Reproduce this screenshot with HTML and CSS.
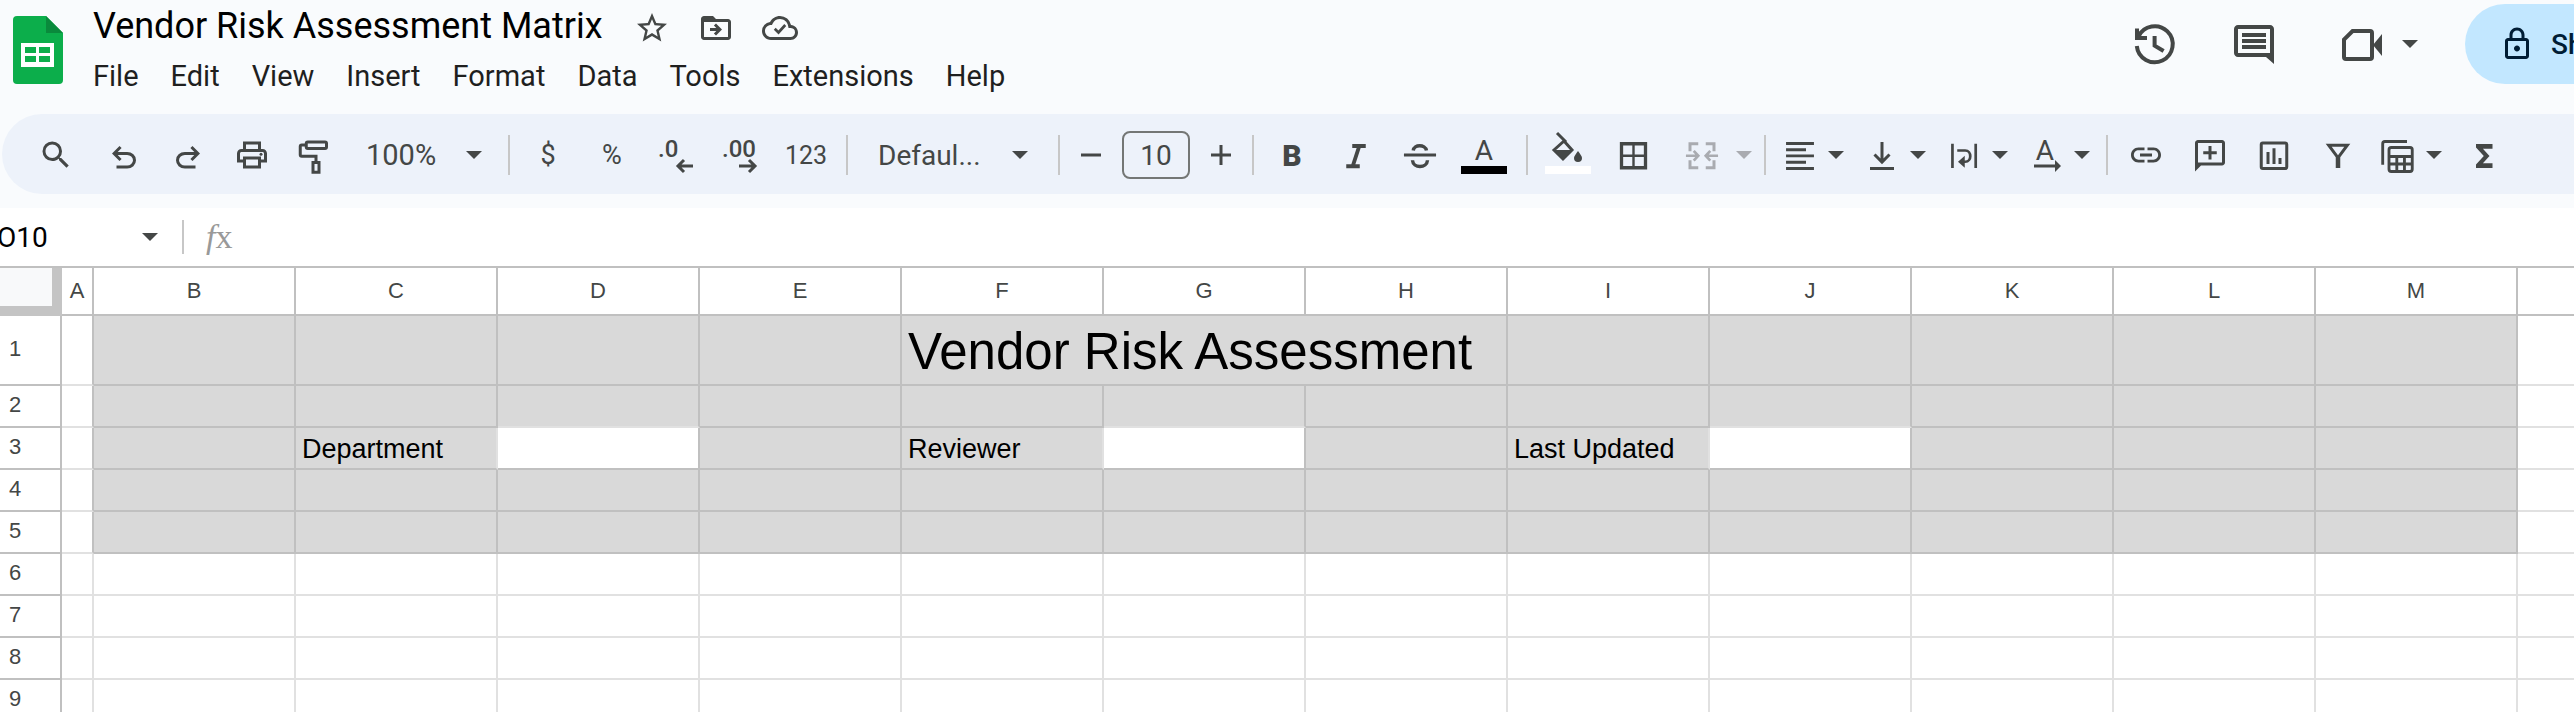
FILE: index.html
```html
<!DOCTYPE html>
<html lang="en">
<head>
    <meta charset="UTF-8">
    <meta name="viewport" content="width=device-width, initial-scale=1.0">
    <title>Vendor Risk Assessment Matrix</title>
    <link rel="stylesheet" href="styles.css">
</head>
<body>

<!-- Shared shapes -->
<svg class="defs" aria-hidden="true">
    <symbol id="caret" viewBox="0 0 16 8"><path d="M0 0h16L8 8z"/></symbol>
</svg>

<header class="header">
    <svg class="logo" viewBox="0 0 50 68" role="img" aria-label="Sheets">
        <path fill="#0cae4b" d="M4 0h29l17 17v47a4 4 0 0 1-4 4H4a4 4 0 0 1-4-4V4a4 4 0 0 1 4-4z"/>
        <path fill="#0a8a3c" d="M33 0l17 17H33z"/>
        <path fill="#fff" fill-rule="evenodd" d="M8 27h33v24H8zM12 31h11v6H12zM26 31h11v6H26zM12 40h11v6H12zM26 40h11v6H26z"/>
    </svg>

    <div class="doc">
        <div class="title-row">
            <h1>Vendor Risk Assessment Matrix</h1>
            <button class="title-btn" aria-label="Star">
                <svg class="icon" viewBox="0 0 24 24"><path d="M22 9.24l-7.19-.62L12 2 9.19 8.63 2 9.24l5.46 4.73L5.82 21 12 17.27 18.18 21l-1.63-7.03L22 9.24zM12 15.4l-3.76 2.27 1-4.28-3.32-2.88 4.38-.38L12 6.1l1.71 4.04 4.38.38-3.32 2.88 1 4.28L12 15.4z"/></svg>
            </button>
            <button class="title-btn" aria-label="Move">
                <svg class="icon" viewBox="0 0 24 24"><path d="M20 6h-8l-2-2H4c-1.1 0-2 .9-2 2v12c0 1.1.9 2 2 2h16c1.1 0 2-.9 2-2V8c0-1.1-.9-2-2-2zm0 12H4V8h16v10z"/><path d="M12.2 12H8v2h4.2l-1.6 1.6L12 17l4-4-4-4-1.4 1.4z"/></svg>
            </button>
            <button class="title-btn" aria-label="Saved to Drive">
                <svg class="icon" viewBox="0 0 24 24"><path d="M19.35 10.04A7.49 7.49 0 0 0 12 4C9.11 4 6.6 5.64 5.35 8.04A5.994 5.994 0 0 0 0 14c0 3.31 2.69 6 6 6h13c2.76 0 5-2.24 5-5 0-2.64-2.05-4.78-4.65-4.96zM19 18H6c-2.21 0-4-1.79-4-4 0-2.05 1.53-3.76 3.56-3.97l1.07-.11.5-.95A5.469 5.469 0 0 1 12 6c2.62 0 4.88 1.86 5.39 4.43l.3 1.5 1.53.11A2.98 2.98 0 0 1 22 15c0 1.65-1.35 3-3 3z"/><path class="line" stroke-width="1.8" d="M8.5 12.5L11 15l4.5-5"/></svg>
            </button>
        </div>
        <nav class="menu">
            <button>File</button>
            <button>Edit</button>
            <button>View</button>
            <button>Insert</button>
            <button>Format</button>
            <button>Data</button>
            <button>Tools</button>
            <button>Extensions</button>
            <button>Help</button>
        </nav>
    </div>

    <div class="actions">
        <button aria-label="Version history">
            <svg class="icon-lg" viewBox="0 0 24 24"><path class="line" d="M4.2 8.3A9 9 0 1 1 3.4 13M3.5 4.2V9h5"/><path class="line" d="M12.3 8v4.8l4.5 2.7"/></svg>
        </button>
        <button aria-label="Comments">
            <svg class="icon-lg" viewBox="0 0 24 24"><path fill-rule="evenodd" d="M2 4.5c0-1.1.9-2 2-2h16c1.1 0 2 .9 2 2V22l-4-3.5H4c-1.1 0-2-.9-2-2zM4 4.5v12h16v-12z"/><path d="M6 6.5h12v2H6zM6 9.5h12v2H6zM6 12.5h12v2H6z"/></svg>
        </button>
        <button class="meet" aria-label="Join a call">
            <svg class="icon-lg" viewBox="0 0 24 24"><path class="line" d="M7.3 5.5H16a1 1 0 0 1 1 1v12a1 1 0 0 1-1 1H4a1 1 0 0 1-1-1V9.8z"/><path d="M22 7v11l-4.5-5.5z"/></svg>
            <svg class="caret"><use href="#caret"/></svg>
        </button>
        <button class="share">
            <svg class="icon" viewBox="0 0 24 24"><path d="M18 8h-1V6c0-2.76-2.24-5-5-5S7 3.24 7 6v2H6c-1.1 0-2 .9-2 2v10c0 1.1.9 2 2 2h12c1.1 0 2-.9 2-2V10c0-1.1-.9-2-2-2zM9 6c0-1.66 1.34-3 3-3s3 1.34 3 3v2H9V6zm9 14H6V10h12v10zm-6-3c1.1 0 2-.9 2-2s-.9-2-2-2-2 .9-2 2 .9 2 2 2z"/></svg>
            Share
        </button>
    </div>
</header>

<div class="toolbar" role="toolbar">
    <button class="tool search" aria-label="Search">
        <svg class="icon" viewBox="0 0 24 24"><path d="M15.5 14h-.79l-.28-.27A6.47 6.47 0 0 0 16 9.5 6.5 6.5 0 1 0 9.5 16c1.61 0 3.09-.59 4.23-1.57l.27.28v.79l5 4.99L20.49 19l-4.99-5zm-6 0C7.01 14 5 11.99 5 9.5S7.01 5 9.5 5 14 7.01 14 9.5 11.99 14 9.5 14z"/></svg>
    </button>
    <button class="tool" aria-label="Undo">
        <svg class="icon" viewBox="0 0 24 24"><path d="M7 21v-2h7.1q1.575 0 2.737-1T18 15.5t-1.163-2.5T14.1 12H7.8l2.6 2.6L9 16l-5-5 5-5 1.4 1.4L7.8 10h6.3q2.425 0 4.163 1.575T20 15.5t-1.737 3.925T14.1 21z"/></svg>
    </button>
    <button class="tool" aria-label="Redo">
        <svg class="icon" viewBox="0 0 24 24"><path transform="matrix(-1 0 0 1 24 0)" d="M7 21v-2h7.1q1.575 0 2.737-1T18 15.5t-1.163-2.5T14.1 12H7.8l2.6 2.6L9 16l-5-5 5-5 1.4 1.4L7.8 10h6.3q2.425 0 4.163 1.575T20 15.5t-1.737 3.925T14.1 21z"/></svg>
    </button>
    <button class="tool" aria-label="Print">
        <svg class="icon" viewBox="0 0 24 24"><path d="M19 8h-1V3H6v5H5c-1.66 0-3 1.34-3 3v6h4v4h12v-4h4v-6c0-1.66-1.34-3-3-3zM8 5h8v3H8V5zm8 12v2H8v-4h8v2zm2-2v-2H6v2H4v-4c0-.55.45-1 1-1h14c.55 0 1 .45 1 1v4h-2z"/><circle cx="18" cy="11.5" r="1"/></svg>
    </button>
    <button class="tool" aria-label="Paint format">
        <svg class="icon" viewBox="0 0 24 24"><path class="line" d="M6.5 3.3H18a1 1 0 0 1 1 1v2.4a1 1 0 0 1-1 1H6.5a1 1 0 0 1-1-1V4.3a1 1 0 0 1 1-1zM5.5 5.3h-3a1 1 0 0 0-1 1v5.5a1 1 0 0 0 1 1H12v4M10 17h4v6.5h-4z"/></svg>
    </button>
    <div class="select zoom">
        <select aria-label="Zoom"><option>100%</option></select>
        <svg class="caret"><use href="#caret"/></svg>
    </div>
    <span class="divider"></span>

    <button class="tool number" aria-label="Format as currency">$</button>
    <button class="tool number" aria-label="Format as percent">%</button>
    <button class="tool" aria-label="Decrease decimal places">
        <svg class="icon" viewBox="0 0 36 36"><text class="decimal" x="-2" y="20">.0</text><path class="line" stroke-width="3" d="M33 29H18M24 23l-6 6 6 6"/></svg>
    </button>
    <button class="tool" aria-label="Increase decimal places">
        <svg class="icon" viewBox="0 0 36 36"><text class="decimal" x="-2" y="20">.00</text><path class="line" stroke-width="3" d="M15 29h16M25 23l6 6-6 6"/></svg>
    </button>
    <button class="tool formats" aria-label="More formats">123</button>
    <span class="divider"></span>

    <div class="select font">
        <select aria-label="Font"><option>Defaul...</option></select>
        <svg class="caret"><use href="#caret"/></svg>
    </div>
    <span class="divider"></span>

    <button class="tool step" aria-label="Decrease font size">
        <svg class="icon" viewBox="0 0 36 36"><path class="line" stroke-width="3" d="M8 18h20"/></svg>
    </button>
    <input class="font-size" type="text" value="10" aria-label="Font size">
    <button class="tool step" aria-label="Increase font size">
        <svg class="icon" viewBox="0 0 36 36"><path class="line" stroke-width="3" d="M8 18h20M18 8v20"/></svg>
    </button>
    <span class="divider"></span>

    <div class="styles">
        <button class="tool bold" aria-label="Bold">B</button>
        <button class="tool" aria-label="Italic">
            <svg class="icon" viewBox="0 0 24 24"><path class="line" stroke-width="2.6" d="M9.5 6h9M5.500 19.500h9M14.200 6L9.800 19.500"/></svg>
        </button>
        <button class="tool" aria-label="Strikethrough">
            <svg class="icon" viewBox="0 0 24 24"><path class="line" d="M1.300 12h21.400"/><path class="line" stroke-width="2.3" d="M7.500 9C8 4.800 15.500 4.800 16.300 9M7 15.500c.3 5.500 9.700 5.500 10 0"/></svg>
        </button>
        <button class="tool" aria-label="Text color">
            <svg class="icon-wide" viewBox="0 0 48 36"><text class="letter" x="24" y="23">A</text><path fill="#000" d="M1 29h46v8H1z"/></svg>
        </button>
    </div>
    <span class="divider"></span>

    <button class="tool" aria-label="Fill color">
        <svg class="icon-wide" viewBox="0 0 48 36"><path class="line" stroke-width="3" d="M13-4l9 9"/><path class="line" stroke-width="3" d="M20 4l8 9-9 9-9-9z"/><path d="M10 13h18l-9 9zM34 14c2 3 4 5 4 7a4 4 0 0 1-8 0c0-2 2-4 4-7z"/><path fill="#fff" d="M1 29h46v8H1z"/></svg>
    </button>
    <button class="tool" aria-label="Borders">
        <svg class="icon" viewBox="0 0 24 24"><path class="line" stroke-width="2.2" d="M5 4.500h16v16H5z"/><path class="line" stroke-width="1.6" d="M13 4.500v16M5 12.500h16"/></svg>
    </button>
    <button class="tool-menu merge" aria-label="Merge cells" disabled>
        <svg class="icon" viewBox="0 0 24 24"><path class="line" d="M9.500 4.500H4v5M14.500 4.500H20v5M9.500 20.500H4v-5M14.500 20.500H20v-5"/><path class="line" stroke-width="1.8" d="M1.300 12.500h8M6.500 9.300l3 3.200-3 3.200M22.700 12.500h-8M17.500 9.300l-3 3.200 3 3.200"/></svg>
        <svg class="caret"><use href="#caret"/></svg>
    </button>
    <span class="divider"></span>

    <div class="tool-group">
        <button class="tool-menu" aria-label="Horizontal align">
            <svg class="icon" viewBox="0 0 24 24"><path class="line" stroke-width="1.9" d="M2.700 4.300h18.600M2.700 8.500H16M2.700 12.600h18.600M2.700 16.800H16M2.700 21h18.600"/></svg>
            <svg class="caret"><use href="#caret"/></svg>
        </button>
        <button class="tool-menu" aria-label="Vertical align">
            <svg class="icon" viewBox="0 0 24 24"><path class="line" d="M4 21h16M12 3.300v13.200M7 11.700l5 5 5-5"/></svg>
            <svg class="caret"><use href="#caret"/></svg>
        </button>
        <button class="tool-menu" aria-label="Text wrapping">
            <svg class="icon" viewBox="0 0 24 24"><path class="line" stroke-width="1.8" d="M4.300 4.500v16.200M19.800 4.500v16.200M7.500 9h5.300c4.500 0 4.500 7.500 0 7.500H10"/><path d="M8 16.500l4.500-4v8z"/></svg>
            <svg class="caret"><use href="#caret"/></svg>
        </button>
        <button class="tool-menu" aria-label="Text rotation">
            <svg class="icon" viewBox="0 0 36 36"><text class="letter" x="17" y="23">A</text><path class="line" stroke-width="3" d="M6 29h22"/><path d="M27 23l6 6-6 6z"/></svg>
            <svg class="caret"><use href="#caret"/></svg>
        </button>
    </div>
    <span class="divider"></span>

    <div class="styles">
        <button class="tool" aria-label="Insert link">
            <svg class="icon" viewBox="0 0 24 24"><path d="M3.9 12c0-1.71 1.39-3.1 3.1-3.1h4V7H7c-2.76 0-5 2.24-5 5s2.24 5 5 5h4v-1.900H7c-1.710 0-3.100-1.390-3.100-3.100zM8 13h8v-2H8v2zm9-6h-4v1.900h4c1.710 0 3.100 1.390 3.100 3.100s-1.390 3.100-3.100 3.100h-4V17h4c2.760 0 5-2.240 5-5s-2.240-5-5-5z"/></svg>
        </button>
        <button class="tool" aria-label="Insert comment">
            <svg class="icon" viewBox="0 0 24 24"><path fill-rule="evenodd" d="M22 4c0-1.100-.9-2-2-2H4c-1.100 0-2 .9-2 2v19l4-4h14c1.100 0 2-.9 2-2zM4 4h16v13H4z"/><path d="M11 6h2v3.500h3.500v2H13V15h-2v-3.500H7.500v-2H11z"/></svg>
        </button>
        <button class="tool" aria-label="Insert chart">
            <svg class="icon" viewBox="0 0 24 24"><rect class="line" x="3.500" y="4" width="17" height="17" rx="1"/><path d="M7 10h2v8H7zM11 7.500h2V18h-2zM15 14h2v4h-2z"/></svg>
        </button>
        <button class="tool" aria-label="Create a filter">
            <svg class="icon" viewBox="0 0 24 24"><path fill-rule="evenodd" d="M3.800 4.500h16.400l-6.700 9v7.200h-3v-7.200zM7.800 6.500h8.400L12 12.200z"/></svg>
        </button>
    </div>
    <button class="tool-menu" aria-label="Filter views">
        <svg class="icon" viewBox="0 0 24 24"><path class="line" stroke-width="1.9" d="M1.800 18.500v-14A1.500 1.500 0 0 1 3.300 3H18"/><rect class="line" stroke-width="1.9" x="6" y="7" width="15.500" height="16" rx="1.500"/><path class="line" stroke-width="1.9" d="M6 13h15.500M6 18h15.500M11.200 13v10M16.300 13v10"/></svg>
        <svg class="caret"><use href="#caret"/></svg>
    </button>
    <button class="tool" aria-label="Functions">
        <svg class="icon" viewBox="0 0 24 24"><path d="M19 4.700H8V7l5.200 5.700L8 18.400v2.300h11v-3.200h-6.400l4.400-4.800-4.400-4.800H19z"/></svg>
    </button>
</div>

<div class="formula-bar">
    <input class="name-box" type="text" value="O10" aria-label="Name box">
    <svg class="caret"><use href="#caret"/></svg>
    <span class="divider"></span>
    <label class="fx" for="formula"><i>f</i>x</label>
    <input class="formula" id="formula" type="text">
</div>

<table class="sheet">
    <thead>
        <tr id="columns"></tr>
    </thead>
    <tbody id="rows"></tbody>
</table>

<script>
    const columns = 'ABCDEFGHIJKLM'.split('');
    const lastShadedRow = 5;
    const inputs = ['D3', 'G3', 'J3'];
    const labels = { F1: 'Vendor Risk Assessment', C3: 'Department', F3: 'Reviewer', I3: 'Last Updated' };

    // Column letters, with the select-all corner first
    let head = '<th class="corner"></th>';
    columns.forEach(col => {
        head += `<th class="${col === 'A' ? 'narrow' : 'wide'}" scope="col">${col}</th>`;
    });
    document.getElementById('columns').innerHTML = head + '<th></th>';

    // Cell classes depend on the shaded block B1:M5
    function cellClass(col, row) {
        if (row > lastShadedRow) return '';
        if (col === 'A') return 'edge';
        if (inputs.includes(col + row)) return 'entry';
        let name = 'shaded';
        if (inputs.includes(col + (row + 1))) name += ' above-entry';
        if (['C3', 'F3', 'I3'].includes(col + row)) name += ' before-entry';
        if (col + row === 'F1') name += ' heading';
        return name;
    }

    let body = '';
    for (let row = 1; row <= 9; row++) {
        body += `<tr class="${row === 1 ? 'tall' : ''}"><th scope="row">${row}</th>`;
        columns.forEach(col => {
            // F1:H1 is merged
            if (row === 1 && (col === 'G' || col === 'H')) return;
            const span = col + row === 'F1' ? ' colspan="3"' : '';
            body += `<td class="${cellClass(col, row)}"${span}>${labels[col + row] || ''}</td>`;
        });
        body += '<td></td></tr>';
    }
    document.getElementById('rows').innerHTML = body;
</script>

</body>
</html>
```
FILE: styles.css
```css
* {
    box-sizing: border-box;
}

body {
    margin: 0;
    height: 100vh;
    overflow: hidden;
    background-color: #f9fbfd;
    color: #444746;
    font-family: Roboto, "Liberation Sans", sans-serif;
    font-size: 28px;
}

button, input, select {
    margin: 0;
    padding: 0;
    border: none;
    background: none;
    color: inherit;
    font: inherit;
}

button {
    display: flex;
    align-items: center;
    justify-content: center;
    cursor: pointer;
}

/* Icons */
svg {
    display: block;
    flex: none;
    overflow: visible;
    fill: currentColor;
    stroke-width: 2;
}

.defs {
    display: none;
}

.line {
    fill: none;
    stroke: currentColor;
}

.icon {
    width: 36px;
    height: 36px;
}

.icon-wide {
    width: 48px;
    height: 36px;
}

.icon-lg {
    width: 48px;
    height: 48px;
}

.caret {
    width: 16px;
    height: 8px;
}

.decimal {
    font-size: 24px;
    font-weight: 500;
}

.letter {
    font-size: 28px;
    text-anchor: middle;
}

/* Header */
.header {
    display: flex;
    align-items: flex-start;
    padding: 4px 0 20px 13px;
}

.logo {
    width: 50px;
    height: 68px;
    margin-top: 12px;
}

.doc {
    margin-left: 30px;
}

.title-row {
    display: flex;
    align-items: center;
    gap: 28px;
    height: 44px;
}

h1 {
    margin: 0 3px 0 0;
    color: #000;
    font-size: 36px;
    font-weight: 400;
    line-height: 44px;
    white-space: nowrap;
}

.title-btn {
    margin-top: 4px;
}

.menu {
    display: flex;
    gap: 32px;
    margin-top: 10px;
    color: #1f1f1f;
    font-size: 29px;
    line-height: 36px;
}

.actions {
    display: flex;
    align-items: center;
    gap: 52px;
    height: 80px;
    margin-left: auto;
    margin-right: -91px; /* Share runs past the right edge */
}

.meet {
    gap: 16px;
    margin-left: 8px;
}

.share {
    gap: 16px;
    width: 200px;
    height: 80px;
    margin-left: -5px;
    padding-left: 34px;
    justify-content: flex-start;
    border-radius: 40px;
    background-color: #c2e7ff;
    color: #001d35;
    font-weight: 500;
}

/* Toolbar */
.toolbar {
    display: flex;
    align-items: center;
    height: 80px;
    margin: 0 0 14px 2px;
    padding: 2px 0 0 22px;
    border-radius: 40px 0 0 40px;
    background-color: #edf2fa;
}

.toolbar > * {
    flex: none;
}

.tool {
    width: 64px;
    height: 56px;
}

.search {
    margin-right: 4px;
}

.step {
    width: 46px;
}

.number {
    padding-right: 4px;
    font-size: 27px;
}

.formats {
    font-size: 25px;
}

.bold {
    font-size: 30px;
    font-weight: 900;
}

/* Runs of plain icon buttons sit slightly left between their dividers */
.styles {
    display: flex;
    margin: 0 2px 0 -2px;
}

.tool-menu {
    gap: 10px;
    height: 56px;
    padding: 0 8px;
}

.tool-menu:disabled {
    color: #a9abb0;
}

.merge {
    gap: 16px;
    padding: 0 4px 0 20px;
}

.tool-group {
    display: flex;
    gap: 4px;
}

.divider {
    width: 2px;
    height: 40px;
    margin: 0 8px;
    background-color: #c7c7c7;
}

.select {
    position: relative;
}

.select select {
    width: 100%;
    height: 56px;
    appearance: none;
}

.select .caret {
    position: absolute;
    top: 24px;
    right: 20px;
    pointer-events: none;
}

.zoom {
    width: 152px;
}

.zoom select {
    padding-left: 18px;
    font-size: 29px;
}

.zoom .caret {
    right: 18px;
}

.font {
    width: 194px;
}

.font select {
    padding-left: 22px;
}

.font .caret {
    right: 22px;
}

.font-size {
    width: 68px;
    height: 48px;
    margin: 0 8px;
    border: 2px solid #747775;
    border-radius: 8px;
    text-align: center;
}

/* Formula bar */
.formula-bar {
    display: flex;
    align-items: center;
    height: 60px;
    border-bottom: 2px solid #c0c0c0;
    background-color: #fff;
}

.name-box {
    width: 145px;
    margin-left: -3px;
    color: #000;
}

.formula-bar .divider {
    height: 34px;
    margin: 0 22px 0 24px;
}

.fx {
    color: #999;
    font-family: "Liberation Serif", serif;
    font-size: 34px;
}

.formula {
    flex: 1;
    margin-left: 16px;
}

/* Sheet */
.sheet {
    width: 100%;
    table-layout: fixed;
    border-spacing: 0;
    background-color: #fff;
    font-family: "Liberation Sans", Arial, sans-serif;
}

.sheet th, .sheet td {
    height: 42px;
    padding: 0;
    border: 0 solid #e1e1e1;
    border-width: 0 2px 2px 0;
}

.sheet th {
    border-color: #c0c0c0;
    font-size: 22px;
    font-weight: 400;
}

.sheet thead th {
    height: 48px;
}

.sheet tbody th {
    padding: 0 30px 3px 0;
}

.sheet .tall th, .sheet .tall td {
    height: 70px;
}

.sheet .corner {
    width: 62px;
    border-width: 0 10px 10px 0;
    border-color: #c4c4c4;
    background-color: #f8f9fa;
}

.narrow {
    width: 32px;
}

.wide {
    width: 202px;
}

.sheet td {
    padding: 0 6px 3px;
    color: #000;
    font-size: 27px;
    vertical-align: bottom;
    white-space: nowrap;
}

.sheet th:last-child, .sheet td:last-child {
    border-right: none;
}

.sheet .edge {
    border-right-color: #c0c0c0;
}

.sheet .shaded {
    border-color: #c0c0c0;
    background-color: #d9d9d9;
}

.sheet .entry {
    border-color: #c0c0c0;
}

.sheet .above-entry {
    border-bottom-color: #e1e1e1;
}

.sheet .before-entry {
    border-right-color: #e1e1e1;
}

.sheet .heading {
    font-size: 51px;
    line-height: 58px;
}
```
